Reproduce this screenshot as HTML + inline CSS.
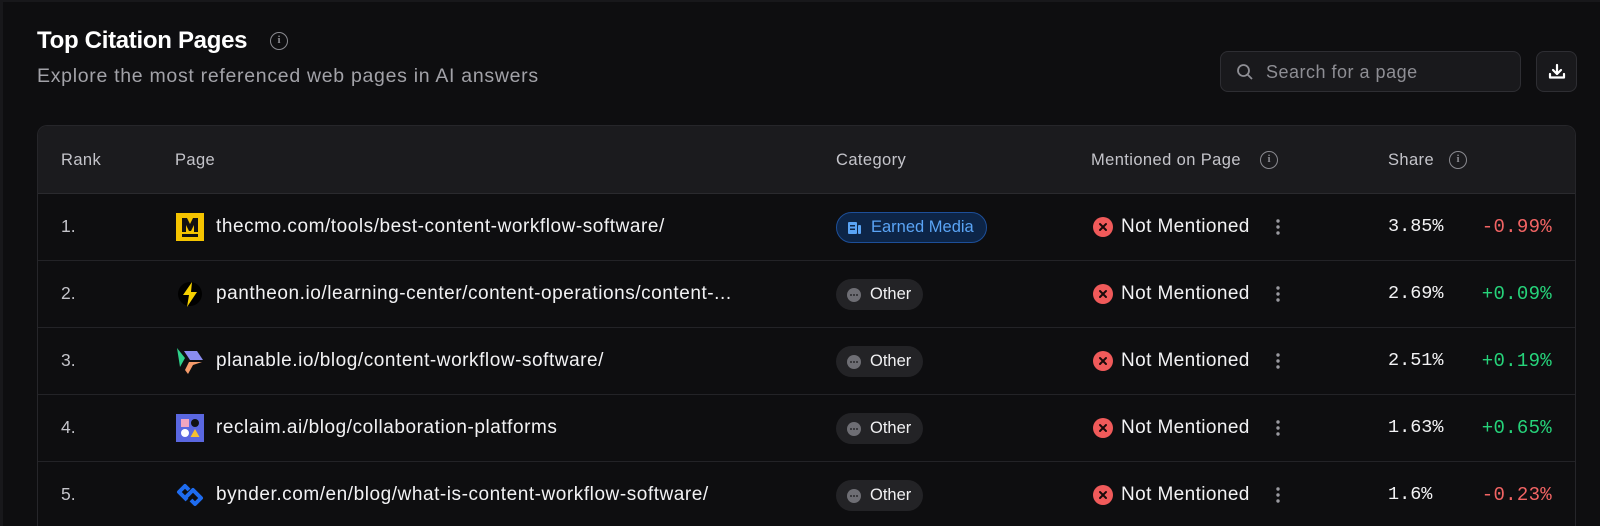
<!DOCTYPE html>
<html><head><meta charset="utf-8"><style>
*{box-sizing:border-box;margin:0;padding:0}
html{width:1600px;height:526px;overflow:hidden}
body{width:1600px;height:526px;overflow:hidden;background:#0e0e10;font-family:"Liberation Sans",sans-serif;color:#ececee;position:relative}
.edge{position:absolute;left:0;top:0;width:3px;height:526px;background:#18181b}
.edgeT{position:absolute;left:0;top:0;width:1600px;height:2px;background:#18181b}
.title{position:absolute;left:37px;top:27px;font-size:24px;font-weight:bold;color:#fff;letter-spacing:-0.3px}
.sub{position:absolute;left:37px;top:65px;font-size:19.5px;letter-spacing:0.7px;color:#a2a2a8}
.info{display:inline-block;width:18px;height:18px;border:1.6px solid #8a8a90;border-radius:50%;position:absolute;font-size:11px;color:#8a8a90;text-align:center;line-height:15px;font-family:"Liberation Serif",serif;font-weight:bold}
.search{position:absolute;left:1220px;top:51px;width:301px;height:41px;border:1px solid #2e2e33;border-radius:8px;background:#19191c}
.search span{position:absolute;left:45px;top:10px;font-size:18px;letter-spacing:0.5px;color:#8e8e94}
.dl{position:absolute;left:1536px;top:51px;width:41px;height:41px;border:1px solid #2e2e33;border-radius:8px;background:#19191c}
.table{position:absolute;left:37px;top:125px;width:1539px;height:401px;border:1px solid #26262a;border-bottom:none;border-radius:10px 10px 0 0;overflow:hidden;background:#0e0e10}
.hdr{position:absolute;left:0;top:0;width:100%;height:68px;background:#1b1b1e;border-bottom:1px solid #2a2a2e}
.h{position:absolute;top:25px;font-size:16.5px;letter-spacing:0.4px;color:#c4c4ca}
.row{position:absolute;left:0;width:100%;height:67px;border-bottom:1px solid #232327}
.row>*{position:absolute}
.rk{left:23px;top:22px;font-size:17.5px;color:#c4c4ca}
.fav{left:138px;top:19px;width:28px;height:28px}
.url{left:178px;top:22px;font-size:19px;letter-spacing:0.55px;color:#f2f2f4}
.chip{left:798px;top:18px;height:31px;border-radius:16px;background:#232326;font-size:16.5px;color:#f0f0f2;padding:6px 12px 0 34px}
.chip i{position:absolute;left:11px;top:9px;width:14px;height:14px;border-radius:50%;background:#6e6e74}
.chip i b{position:absolute;top:6px;width:2px;height:2px;background:#2a2a2e;border-radius:50%}
.em{background:#0d2547;border:1.5px solid #1d4f99;color:#5aa4f5;padding-top:5px}
.x{left:1055px;top:23px;width:20px;height:20px;border-radius:50%;background:#f05a5a}
.nm{left:1083px;top:22px;font-size:19px;letter-spacing:0.4px;color:#f2f2f4}
.dots{left:1238px;top:23px;width:4px;height:20px}
.sh{left:1350px;top:22px;font-family:"Liberation Mono",monospace;font-size:18.5px;color:#f2f2f4}
.dt{right:23px;top:22px;font-family:"Liberation Mono",monospace;font-size:19px;letter-spacing:0.3px}
.neg{color:#f26464}.pos{color:#26d37a}
</style></head><body>
<div class="edge"></div><div class="edgeT"></div>
<div class="title">Top Citation Pages</div>
<span class="info" style="left:270px;top:32px">i</span>
<div class="sub">Explore the most referenced web pages in AI answers</div>
<div class="search"><svg style="position:absolute;left:15px;top:11px" width="18" height="18" viewBox="0 0 18 18" fill="none" stroke="#8e8e94" stroke-width="1.8"><circle cx="7.5" cy="7.5" r="5.5"/><path d="M11.5 11.5L16 16"/></svg><span>Search for a page</span></div>
<div class="dl"><svg style="position:absolute;left:10px;top:10px" width="20" height="20" viewBox="0 0 20 20" fill="none" stroke="#fff" stroke-width="2.2" stroke-linecap="round" stroke-linejoin="round"><path d="M10 3v9M6 8l4 4 4-4M3 12v3.5h14V12"/></svg></div>
<div class="table">
<div class="hdr">
<div class="h" style="left:23px">Rank</div>
<div class="h" style="left:137px">Page</div>
<div class="h" style="left:798px">Category</div>
<div class="h" style="left:1053px">Mentioned on Page</div>
<span class="info" style="left:1222px;top:25px">i</span>
<div class="h" style="left:1350px">Share</div>
<span class="info" style="left:1411px;top:25px">i</span>
</div>

<div class="row" style="top:68px">
<div class="rk">1.</div>
<svg class="fav" viewBox="0 0 28 28"><rect width="28" height="28" fill="#f5c400"/><path d="M6 5h5l3 6 3-6h5v14h-4v-7l-3 6h-2l-3-6v7H6z" fill="#111"/><rect x="6" y="21" width="16" height="3" fill="#111"/></svg>
<div class="url">thecmo.com/tools/best-content-workflow-software/</div>
<div class="chip em"><svg style="position:absolute;left:11px;top:8px" width="14" height="14" viewBox="0 0 14 14" fill="#5aa4f5"><rect x="0" y="1" width="9" height="12" rx="1"/><rect x="10" y="4" width="3" height="9" rx="1"/><rect x="2" y="4" width="5" height="1.5" fill="#0d2547"/><rect x="2" y="7.5" width="5" height="1.5" fill="#0d2547"/></svg>Earned Media</div>
<div class="x"><svg width="20" height="20" viewBox="0 0 20 20" stroke="#1a0a0a" stroke-width="2" stroke-linecap="round"><path d="M7 7l6 6M13 7l-6 6"/></svg></div>
<div class="nm">Not Mentioned</div>
<svg class="dots" viewBox="0 0 4 20" fill="#9a9aa0"><circle cx="2" cy="4" r="1.7"/><circle cx="2" cy="10" r="1.7"/><circle cx="2" cy="16" r="1.7"/></svg>
<div class="sh">3.85%</div><div class="dt neg">-0.99%</div>
</div>

<div class="row" style="top:135px">
<div class="rk">2.</div>
<svg class="fav" viewBox="0 0 28 28"><circle cx="14" cy="14" r="12" fill="#000"/><path d="M16 2L7 15h6l-2 12 10-15h-6z" fill="#f5d000"/></svg>
<div class="url">pantheon.io/learning-center/content-operations/content-...</div>
<div class="chip"><i><b style="left:3px"></b><b style="left:6px"></b><b style="left:9px"></b></i>Other</div>
<div class="x"><svg width="20" height="20" viewBox="0 0 20 20" stroke="#1a0a0a" stroke-width="2" stroke-linecap="round"><path d="M7 7l6 6M13 7l-6 6"/></svg></div>
<div class="nm">Not Mentioned</div>
<svg class="dots" viewBox="0 0 4 20" fill="#9a9aa0"><circle cx="2" cy="4" r="1.7"/><circle cx="2" cy="10" r="1.7"/><circle cx="2" cy="16" r="1.7"/></svg>
<div class="sh">2.69%</div><div class="dt pos">+0.09%</div>
</div>

<div class="row" style="top:202px">
<div class="rk">3.</div>
<svg class="fav" viewBox="0 0 28 28"><path d="M1 1l8 10-5 9z" fill="#2ed08a"/><path d="M8 4h13l6 9H14z" fill="#8a8cf0"/><path d="M13 15h13l-9 3-5 9-3-4z" fill="#f59a6a"/></svg>
<div class="url">planable.io/blog/content-workflow-software/</div>
<div class="chip"><i><b style="left:3px"></b><b style="left:6px"></b><b style="left:9px"></b></i>Other</div>
<div class="x"><svg width="20" height="20" viewBox="0 0 20 20" stroke="#1a0a0a" stroke-width="2" stroke-linecap="round"><path d="M7 7l6 6M13 7l-6 6"/></svg></div>
<div class="nm">Not Mentioned</div>
<svg class="dots" viewBox="0 0 4 20" fill="#9a9aa0"><circle cx="2" cy="4" r="1.7"/><circle cx="2" cy="10" r="1.7"/><circle cx="2" cy="16" r="1.7"/></svg>
<div class="sh">2.51%</div><div class="dt pos">+0.19%</div>
</div>

<div class="row" style="top:269px">
<div class="rk">4.</div>
<svg class="fav" viewBox="0 0 28 28"><rect width="28" height="28" fill="#5a67e0"/><rect x="5" y="5" width="8" height="8" fill="#f2a5c0"/><circle cx="19" cy="9" r="4" fill="#111"/><circle cx="9" cy="19" r="4" fill="#fff"/><path d="M19 15l4.5 8h-9z" fill="#f5c030"/></svg>
<div class="url">reclaim.ai/blog/collaboration-platforms</div>
<div class="chip"><i><b style="left:3px"></b><b style="left:6px"></b><b style="left:9px"></b></i>Other</div>
<div class="x"><svg width="20" height="20" viewBox="0 0 20 20" stroke="#1a0a0a" stroke-width="2" stroke-linecap="round"><path d="M7 7l6 6M13 7l-6 6"/></svg></div>
<div class="nm">Not Mentioned</div>
<svg class="dots" viewBox="0 0 4 20" fill="#9a9aa0"><circle cx="2" cy="4" r="1.7"/><circle cx="2" cy="10" r="1.7"/><circle cx="2" cy="16" r="1.7"/></svg>
<div class="sh">1.63%</div><div class="dt pos">+0.65%</div>
</div>

<div class="row" style="top:336px">
<div class="rk">5.</div>
<svg class="fav" viewBox="0 0 28 28" fill="none" stroke="#1e6cf0" stroke-width="4" stroke-linejoin="round"><path d="M13 9l-4-4-6 6 8 8M15 19l4 4 6-6-8-8-8 8"/></svg>
<div class="url">bynder.com/en/blog/what-is-content-workflow-software/</div>
<div class="chip"><i><b style="left:3px"></b><b style="left:6px"></b><b style="left:9px"></b></i>Other</div>
<div class="x"><svg width="20" height="20" viewBox="0 0 20 20" stroke="#1a0a0a" stroke-width="2" stroke-linecap="round"><path d="M7 7l6 6M13 7l-6 6"/></svg></div>
<div class="nm">Not Mentioned</div>
<svg class="dots" viewBox="0 0 4 20" fill="#9a9aa0"><circle cx="2" cy="4" r="1.7"/><circle cx="2" cy="10" r="1.7"/><circle cx="2" cy="16" r="1.7"/></svg>
<div class="sh">1.6%</div><div class="dt neg">-0.23%</div>
</div>
</div>
</body></html>
